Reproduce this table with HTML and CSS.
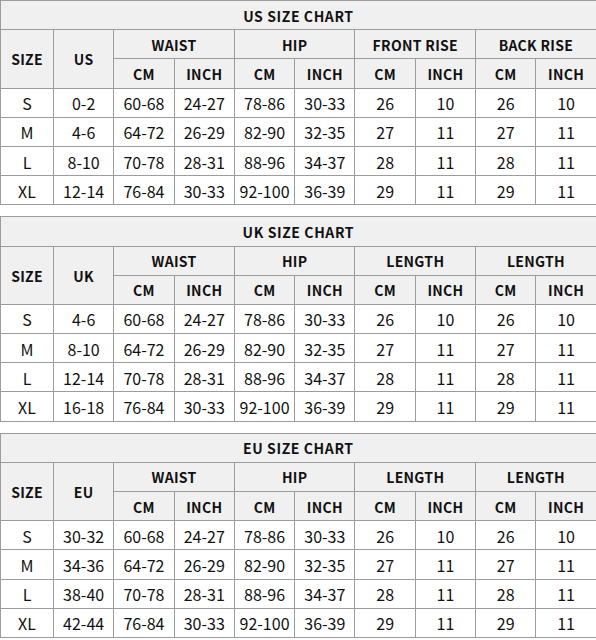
FILE: index.html
```html
<!DOCTYPE html>
<html>
<head>
<meta charset="utf-8">
<link rel="stylesheet" href="styles.css">
</head>
<body>
<div class="page">
  <table class="chart">
    <colgroup><col class="c-size"><col span="9" class="c-val"></colgroup>
    <tr class="title"><th colspan="10">US SIZE CHART</th></tr>
    <tr class="head"><th rowspan="2">SIZE</th><th rowspan="2">US</th><th colspan="2">WAIST</th><th colspan="2">HIP</th><th colspan="2">FRONT RISE</th><th colspan="2">BACK RISE</th></tr>
    <tr class="head"><th>CM</th><th>INCH</th><th>CM</th><th>INCH</th><th>CM</th><th>INCH</th><th>CM</th><th>INCH</th></tr>
    <tr><td>S</td><td>0-2</td><td>60-68</td><td>24-27</td><td>78-86</td><td>30-33</td><td>26</td><td>10</td><td>26</td><td>10</td></tr>
    <tr><td>M</td><td>4-6</td><td>64-72</td><td>26-29</td><td>82-90</td><td>32-35</td><td>27</td><td>11</td><td>27</td><td>11</td></tr>
    <tr><td>L</td><td>8-10</td><td>70-78</td><td>28-31</td><td>88-96</td><td>34-37</td><td>28</td><td>11</td><td>28</td><td>11</td></tr>
    <tr><td>XL</td><td>12-14</td><td>76-84</td><td>30-33</td><td>92-100</td><td>36-39</td><td>29</td><td>11</td><td>29</td><td>11</td></tr>
  </table>

  <table class="chart">
    <colgroup><col class="c-size"><col span="9" class="c-val"></colgroup>
    <tr class="title"><th colspan="10">UK SIZE CHART</th></tr>
    <tr class="head"><th rowspan="2">SIZE</th><th rowspan="2">UK</th><th colspan="2">WAIST</th><th colspan="2">HIP</th><th colspan="2">LENGTH</th><th colspan="2">LENGTH</th></tr>
    <tr class="head"><th>CM</th><th>INCH</th><th>CM</th><th>INCH</th><th>CM</th><th>INCH</th><th>CM</th><th>INCH</th></tr>
    <tr><td>S</td><td>4-6</td><td>60-68</td><td>24-27</td><td>78-86</td><td>30-33</td><td>26</td><td>10</td><td>26</td><td>10</td></tr>
    <tr><td>M</td><td>8-10</td><td>64-72</td><td>26-29</td><td>82-90</td><td>32-35</td><td>27</td><td>11</td><td>27</td><td>11</td></tr>
    <tr><td>L</td><td>12-14</td><td>70-78</td><td>28-31</td><td>88-96</td><td>34-37</td><td>28</td><td>11</td><td>28</td><td>11</td></tr>
    <tr><td>XL</td><td>16-18</td><td>76-84</td><td>30-33</td><td>92-100</td><td>36-39</td><td>29</td><td>11</td><td>29</td><td>11</td></tr>
  </table>

  <table class="chart">
    <colgroup><col class="c-size"><col span="9" class="c-val"></colgroup>
    <tr class="title"><th colspan="10">EU SIZE CHART</th></tr>
    <tr class="head"><th rowspan="2">SIZE</th><th rowspan="2">EU</th><th colspan="2">WAIST</th><th colspan="2">HIP</th><th colspan="2">LENGTH</th><th colspan="2">LENGTH</th></tr>
    <tr class="head"><th>CM</th><th>INCH</th><th>CM</th><th>INCH</th><th>CM</th><th>INCH</th><th>CM</th><th>INCH</th></tr>
    <tr><td>S</td><td>30-32</td><td>60-68</td><td>24-27</td><td>78-86</td><td>30-33</td><td>26</td><td>10</td><td>26</td><td>10</td></tr>
    <tr><td>M</td><td>34-36</td><td>64-72</td><td>26-29</td><td>82-90</td><td>32-35</td><td>27</td><td>11</td><td>27</td><td>11</td></tr>
    <tr><td>L</td><td>38-40</td><td>70-78</td><td>28-31</td><td>88-96</td><td>34-37</td><td>28</td><td>11</td><td>28</td><td>11</td></tr>
    <tr><td>XL</td><td>42-44</td><td>76-84</td><td>30-33</td><td>92-100</td><td>36-39</td><td>29</td><td>11</td><td>29</td><td>11</td></tr>
  </table>
</div>
</body>
</html>
```

FILE: styles.css
```css
html, body {
  margin: 0;
  padding: 0;
  background: #ffffff;
}

.page {
  display: flex;
  flex-direction: column;
  gap: 11px;
  width: 596px;
}

.chart {
  width: 596px;
  border-collapse: collapse;
  table-layout: fixed;
  font-family: "Noto Sans CJK SC", "Noto Sans", sans-serif;
  color: #111111;
}

.c-size { width: 53px; }
.c-val { width: 60.3px; }

.chart th,
.chart td {
  border: 1px solid #9c9c9c;
  height: 27.2px;
  padding: 1px 0 0;
  text-align: center;
  vertical-align: middle;
  line-height: 1;
  white-space: nowrap;
}

.chart td {
  font-size: 16px;
  font-weight: 400;
  background: #ffffff;
}

.chart th {
  font-size: 14px;
  font-weight: 700;
  letter-spacing: 0.3px;
  background: #f0f0f0;
}

.chart .title th {
  letter-spacing: 0.6px;
}
```
